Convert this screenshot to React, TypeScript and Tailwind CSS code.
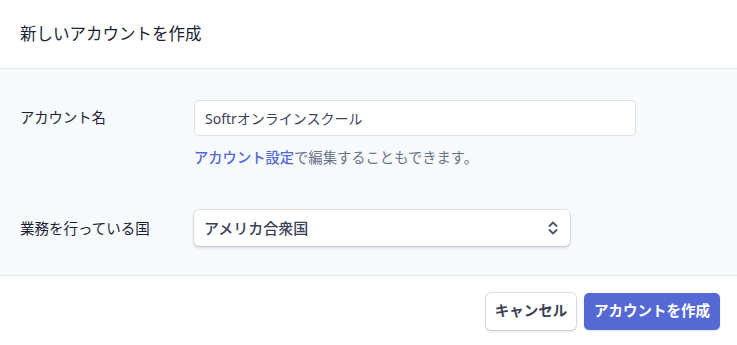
const font = {
  fontFamily: '"Noto Sans", "Noto Sans CJK JP", sans-serif',
};

function UpDown() {
  return (
    <svg width="12" height="16" viewBox="0 0 12 16" fill="none" className="text-[#4f566b]">
      <path d="M2.5 6 6 2.5 9.5 6" stroke="currentColor" strokeWidth="1.8" strokeLinecap="round" strokeLinejoin="round" />
      <path d="M2.5 10 6 13.5 9.5 10" stroke="currentColor" strokeWidth="1.8" strokeLinecap="round" strokeLinejoin="round" />
    </svg>
  );
}

export default function App() {
  return (
    <div
      className="w-[737px] h-[345px] bg-white flex flex-col text-[#1a1f36]"
      style={font}
    >
      <header className="h-[69px] px-5 flex items-center border-b border-[#e3e8ee]">
        <h2 className="text-[16.5px] leading-6 text-[#1a1f36]">新しいアカウントを作成</h2>
      </header>

      <section className="bg-[#f7fafc] border-b border-[#e3e8ee] pt-[31px] pb-[29px] pl-5 pr-[101px]">
        <div className="grid grid-cols-[174px_1fr] items-center">
          <label className="text-[14.3px] leading-5">アカウント名</label>
          <input
            defaultValue="Softrオンラインスクール"
            className="h-[36px] w-full rounded-[5px] border border-[#dcdfe6] bg-white px-[10px] text-[14px] text-[#3c4257] outline-none"
            style={font}
          />
          <div />
          <p className="mt-[12px] text-[14.3px] leading-5 text-[#697386]">
            <a href="#" className="text-[#5469d4] font-medium">
              アカウント設定
            </a>
            で編集することもできます。
          </p>
        </div>

        <div className="mt-[42px] grid grid-cols-[174px_376px] items-center">
          <label className="text-[14.5px] leading-5">業務を行っている国</label>
          <button className="h-[36px] w-full rounded-[5px] bg-white pl-[10px] pr-[11px] flex items-center justify-between text-[15px] font-medium text-[#3c4257] shadow-[0_0_0_1px_rgba(60,66,87,0.12),0_2px_3px_rgba(60,66,87,0.18)]">
            <span>アメリカ合衆国</span>
            <UpDown />
          </button>
        </div>
      </section>

      <footer className="flex-1 flex items-center justify-end gap-2 pr-[17px] pt-[1px]">
        <button className="h-[37px] w-[90px] rounded-[5px] bg-white text-[14.5px] font-semibold text-[#3c4257] shadow-[0_0_0_1px_rgba(60,66,87,0.16),0_2px_3px_rgba(60,66,87,0.14)]">
          キャンセル
        </button>
        <button className="h-[37px] w-[136px] rounded-[5px] bg-[#5469d4] text-[14.5px] font-semibold text-white shadow-[0_1px_2px_rgba(0,0,0,0.12)]">
          アカウントを作成
        </button>
      </footer>
    </div>
  );
}
